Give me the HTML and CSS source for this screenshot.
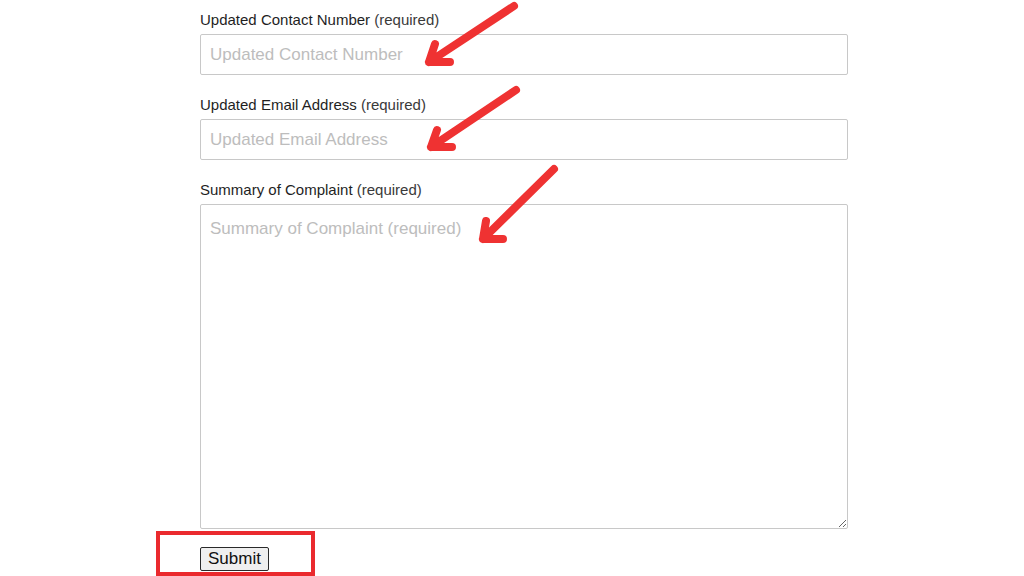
FILE: index.html
```html
<!DOCTYPE html>
<html>

<head>
    <title>Update Complaint</title>
    <link rel="stylesheet" href="styles.css">
</head>

<body>
    <form class="complaint-form">
        <div class="field">
            <label class="field-label">Updated Contact Number <span class="req">(required)</span></label>
            <input class="field-input" type="text" placeholder="Updated Contact Number">
        </div>
        <div class="field">
            <label class="field-label">Updated Email Address <span class="req">(required)</span></label>
            <input class="field-input" type="text" placeholder="Updated Email Address">
        </div>
        <div class="field field-summary">
            <label class="field-label">Summary of Complaint <span class="req">(required)</span></label>
            <textarea class="field-input field-area" placeholder="Summary of Complaint (required)"></textarea>
        </div>
        <div class="actions">
            <button class="submit" type="button">Submit</button>
        </div>
    </form>

    <!-- annotations drawn over the screenshot -->
    <div class="highlight-box"></div>
    <svg class="arrows" width="1024" height="576" viewBox="0 0 1024 576">
        <g fill="none" stroke="#ef3232" stroke-width="8" stroke-linecap="round" stroke-linejoin="round">
            <path d="M514 6 L429 62 M435 44 L429 62 L450 62" />
            <path d="M516 90 L431 147 M437 130 L431 147 L452 147" />
            <path d="M554 169 L483 239 M486 221 L483 239 L503 239" />
        </g>
    </svg>
</body>

</html>
```

FILE: styles.css
```css
:root {
    --label-color: #1f1f1f;
    --border-color: #c8c8c8;
    --placeholder-color: #bdbdbd;
    --mark-red: #ea2a2e;
}

body {
    margin: 0;
    background: #fff;
    font-family: "Liberation Sans", Arial, sans-serif;
    position: relative;
    height: 576px;
    overflow: hidden;
}

.complaint-form {
    width: 648px;
    padding: 11px 0 0 200px;
}

.field {
    display: flex;
    flex-direction: column;
    gap: 5px;
    margin-bottom: 21px;
}

.field-label {
    font-size: 15px;
    line-height: 18px;
    color: var(--label-color);
}

.req {
    color: #3a3a3a;
}

.field-input {
    box-sizing: border-box;
    height: 41px;
    width: 648px;
    border: 1px solid var(--border-color);
    border-radius: 2px;
    padding: 0 9px;
    font-family: "Liberation Sans", Arial, sans-serif;
    font-size: 17px;
    color: #333;
    background: #fff;
}

.field-input::placeholder {
    color: var(--placeholder-color);
}

.field-area {
    height: 325px;
    padding-top: 14px;
    resize: both;
}

.field-summary {
    margin-bottom: 18px;
}

.actions {
    display: flex;
}

.submit {
    font-family: "Liberation Sans", Arial, sans-serif;
    font-size: 17px;
    line-height: 20px;
    padding: 1px 7px;
    color: #111;
    background: #efefef;
    border: 1px solid #2a2a2a;
    border-radius: 2px;
}

.highlight-box {
    position: absolute;
    left: 156px;
    top: 531px;
    width: 151px;
    height: 37px;
    border: 4px solid var(--mark-red);
}

.arrows {
    position: absolute;
    left: 0;
    top: 0;
    pointer-events: none;
}
```
